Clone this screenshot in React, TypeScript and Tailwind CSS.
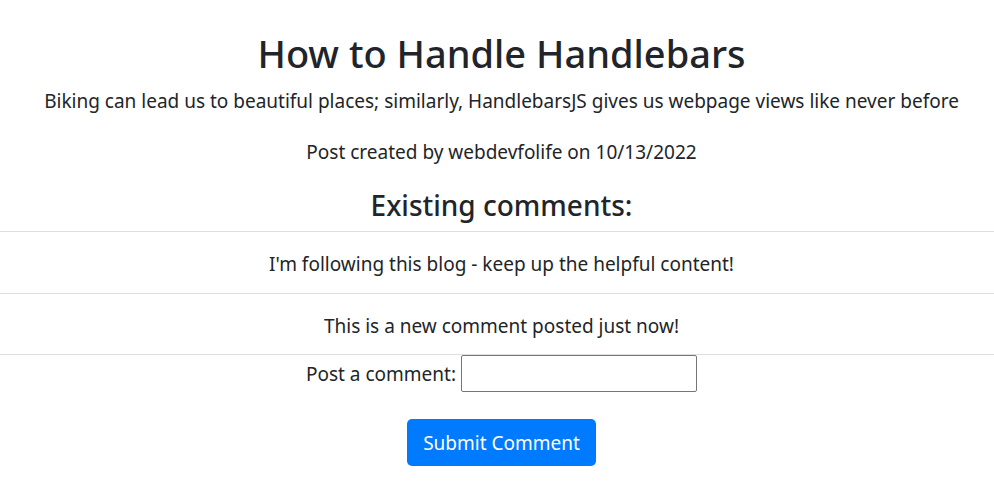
export default function App() {
  const comments = [
    "I'm following this blog - keep up the helpful content!",
    'This is a new comment posted just now!',
  ];

  return (
    <main className="min-h-screen w-full bg-white text-[#212529] font-['Noto_Sans',sans-serif] flex flex-col items-center pt-[29px]">
      <header className="flex flex-col items-center pl-[9px]">
        <h1 className="text-[38px] leading-[48px] font-medium">How to Handle Handlebars</h1>
        <p className="text-[19px] leading-[30px] mt-[9px]">
          Biking can lead us to beautiful places; similarly, HandlebarsJS gives us webpage views like never before
        </p>
        <p className="text-[19px] leading-[30px] mt-[21px]">Post created by webdevfolife on 10/13/2022</p>
        <h3 className="text-[28px] leading-[34px] font-medium mt-[21px]">Existing comments:</h3>
      </header>

      {/* comment list */}
      <div className="w-full mt-[9px] border-t border-[#dedede]">
        {comments.map((c, i) => (
          <div
            key={c}
            className={`border-b border-[#dedede] pt-[17px] pl-[9px] text-center ${i === comments.length - 1 ? 'pb-[13px]' : 'pb-[14px]'}`}
          >
            <p className="text-[19px] leading-[30px]">{c}</p>
          </div>
        ))}
      </div>

      <form className="flex flex-col items-center pl-[9px]" onSubmit={(e) => e.preventDefault()}>
        <div className="flex items-center gap-[5px]">
          <label htmlFor="comment" className="text-[19px] leading-[30px]">Post a comment:</label>
          <input
            id="comment"
            type="text"
            className="w-[236px] h-[37px] border border-[#767676] rounded-[2px] px-1 text-[19px] outline-none"
          />
        </div>
        <button
          type="submit"
          className="mt-[27px] h-[47px] px-4 rounded-[5px] bg-[#007bff] text-white text-[19px] leading-[30px]"
        >
          Submit Comment
        </button>
      </form>
    </main>
  );
}
